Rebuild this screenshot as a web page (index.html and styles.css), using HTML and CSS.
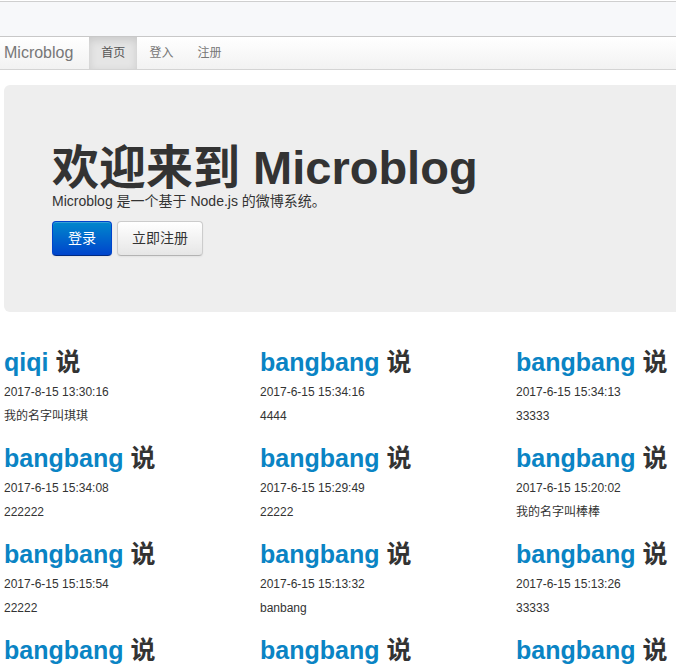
FILE: index.html
```html
<!DOCTYPE html>
<html lang="zh-CN">
<head>
<meta charset="utf-8">
<title>Microblog</title>
<link rel="stylesheet" href="styles.css">
</head>
<body>
<div class="topbar"></div>
<div class="navbar">
  <a class="brand" href="#">Microblog</a>
  <ul class="nav">
    <li class="active"><a href="#">首页</a></li>
    <li><a href="#">登入</a></li>
    <li><a href="#">注册</a></li>
  </ul>
</div>
<div class="container">
  <div class="hero">
    <h1>欢迎来到 Microblog</h1>
    <p class="lead">Microblog 是一个基于 Node.js 的微博系统。</p>
    <div class="actions">
      <a class="btn btn-primary" href="#">登录</a>
      <a class="btn" href="#">立即注册</a>
    </div>
  </div>
  <div class="posts">
    <div class="post"><h3><a href="#">qiqi</a> 说</h3><p class="date">2017-8-15 13:30:16</p><p class="text">我的名字叫琪琪</p></div>
    <div class="post"><h3><a href="#">bangbang</a> 说</h3><p class="date">2017-6-15 15:34:16</p><p class="text">4444</p></div>
    <div class="post"><h3><a href="#">bangbang</a> 说</h3><p class="date">2017-6-15 15:34:13</p><p class="text">33333</p></div>
    <div class="post"><h3><a href="#">bangbang</a> 说</h3><p class="date">2017-6-15 15:34:08</p><p class="text">222222</p></div>
    <div class="post"><h3><a href="#">bangbang</a> 说</h3><p class="date">2017-6-15 15:29:49</p><p class="text">22222</p></div>
    <div class="post"><h3><a href="#">bangbang</a> 说</h3><p class="date">2017-6-15 15:20:02</p><p class="text">我的名字叫棒棒</p></div>
    <div class="post"><h3><a href="#">bangbang</a> 说</h3><p class="date">2017-6-15 15:15:54</p><p class="text">22222</p></div>
    <div class="post"><h3><a href="#">bangbang</a> 说</h3><p class="date">2017-6-15 15:13:32</p><p class="text">banbang</p></div>
    <div class="post"><h3><a href="#">bangbang</a> 说</h3><p class="date">2017-6-15 15:13:26</p><p class="text">33333</p></div>
    <div class="post"><h3><a href="#">bangbang</a> 说</h3><p class="date">2017-6-15 15:12:40</p><p class="text">11111</p></div>
    <div class="post"><h3><a href="#">bangbang</a> 说</h3><p class="date">2017-6-15 15:10:21</p><p class="text">bangbang</p></div>
    <div class="post"><h3><a href="#">bangbang</a> 说</h3><p class="date">2017-6-15 15:08:05</p><p class="text">1111</p></div>
  </div>
</div>
</body>
</html>
```
FILE: styles.css
```css
html {
  overflow: hidden;
}
body {
  margin: 0;
  background: #fff;
  color: #333;
  font-family: "Liberation Sans", Arial, "Noto Sans CJK SC", sans-serif;
  font-size: 12px;
  line-height: 20px;
}
a {
  text-decoration: none;
}
.topbar {
  margin-top: 1px;
  height: 34px;
  background: #f7f8fa;
  border-top: 1px solid #cfcfcf;
  border-bottom: 1px solid #c8c8c8;
}
.navbar {
  display: flex;
  align-items: stretch;
  height: 32px;
  background: linear-gradient(#ffffff, #f2f2f2);
  border-bottom: 1px solid #d4d4d4;
  padding-left: 4px;
}
.brand {
  display: flex;
  align-items: center;
  font-size: 16px;
  color: #777;
  margin-right: 16px;
  padding-bottom: 1px;
}
.nav {
  display: flex;
  list-style: none;
  margin: 0;
  padding: 0;
}
.nav li a {
  display: flex;
  align-items: center;
  height: 100%;
  padding: 0 12px;
  font-size: 12px;
  color: #777;
  box-sizing: border-box;
}
.nav li.active a {
  background: #e5e5e5;
  color: #555;
  box-shadow: inset 0 3px 8px rgba(0, 0, 0, 0.125);
}
.container {
  margin-left: 4px;
  width: 768px;
}
.hero {
  margin-top: 15px;
  padding: 58px 48px 56px;
  background: #eeeeee;
  border-radius: 6px;
}
.hero h1 {
  margin: 0;
  font-size: 47px;
  line-height: 50px;
  font-weight: bold;
  color: #333;
}
.lead {
  margin: 0 0 12px;
  font-size: 14px;
  line-height: 16px;
  color: #333;
}
.actions {
  display: flex;
  gap: 5px;
}
.btn {
  display: inline-block;
  padding: 7px 14px;
  font-size: 14px;
  line-height: 19px;
  color: #333;
  background: linear-gradient(#ffffff, #e6e6e6);
  border: 1px solid #cccccc;
  border-bottom-color: #b3b3b3;
  border-radius: 4px;
  box-shadow: inset 0 1px 0 rgba(255, 255, 255, 0.2), 0 1px 2px rgba(0, 0, 0, 0.05);
}
.btn-primary {
  padding: 7px 15px;
  color: #fff;
  background: linear-gradient(#0088cc, #0044cc);
  border-color: #0044cc #0044cc #002a80;
}
.posts {
  margin-top: 32px;
  display: grid;
  grid-template-columns: repeat(3, 256px);
}
.post {
  height: 96px;
}
.post h3 {
  margin: 0;
  font-size: 25px;
  line-height: 36px;
  font-weight: bold;
  color: #333;
}
.post h3 a {
  color: #0a84c4;
}
.post p {
  margin: 0;
  font-size: 12px;
  line-height: 24px;
  color: #333;
}
```
